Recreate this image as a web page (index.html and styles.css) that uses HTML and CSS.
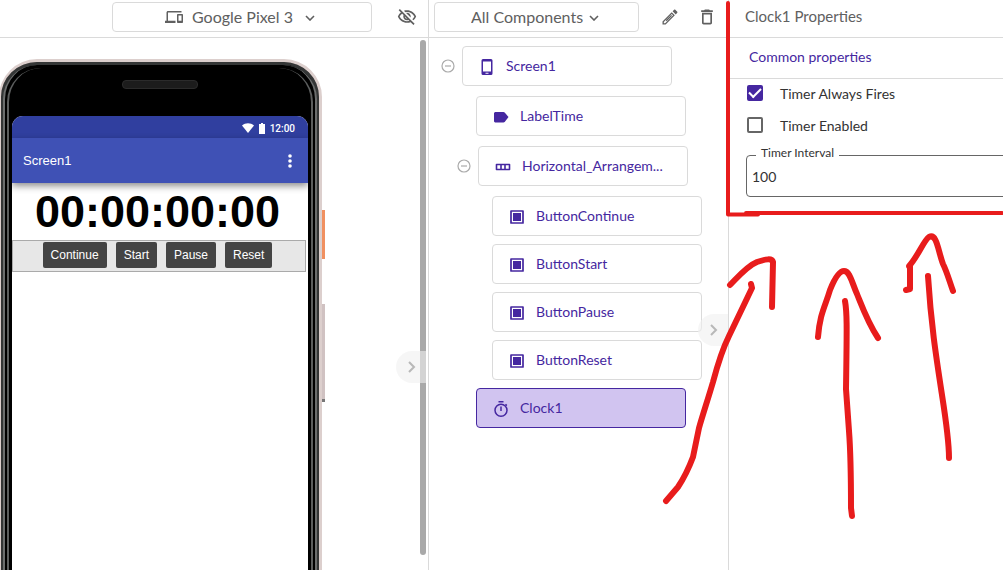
FILE: index.html
```
<!DOCTYPE html>
<html lang="en">
<head>
    <meta charset="utf-8">
    <title>Designer</title>
    <link rel="stylesheet" href="styles.css">
</head>
<body>
    <div class="designer">
        <section class="viewer">
            <header class="bar viewer-bar">
                <div class="select-box device-select">
                    <svg class="device-icon" width="18" height="18" viewBox="0 0 24 24"><path fill="currentColor" d="M4 6h18V4H4c-1.100 0-2 .9-2 2v11H0v3h14v-3H4V6zm19 2h-6c-.55 0-1 .45-1 1v10c0 .55.45 1 1 1h6c.55 0 1-.45 1-1V9c0-.55-.45-1-1-1zm-1 9h-4v-7h4v7z"/></svg>
                    <select aria-label="Device">
                        <option>Google Pixel 3</option>
                        <option>Tablet</option>
                    </select>
                    <svg class="chevron" width="10" height="6" viewBox="0 0 10 6"><path fill="none" stroke="currentColor" stroke-width="1.600" d="M1 1l4 4 4-4"/></svg>
                </div>
                <button type="button" class="icon-button" aria-label="Show hidden components">
                    <svg width="20" height="20" viewBox="0 0 24 24"><path fill="currentColor" d="M12 6c3.790 0 7.170 2.130 8.820 5.500-.59 1.220-1.420 2.270-2.410 3.120l1.410 1.410c1.390-1.230 2.490-2.770 3.180-4.530C21.270 7.110 17 4 12 4c-1.270 0-2.490.2-3.640.57l1.650 1.650C10.660 6.090 11.320 6 12 6zm-1.070 1.140L13 9.210c.57.25 1.030.71 1.280 1.280l2.070 2.070c.08-.34.14-.7.14-1.070C16.500 9.010 14.480 7 12 7c-.37 0-.72.05-1.070.14zM2.010 3.870l2.680 2.680C3.060 7.830 1.770 9.530 1 11.500 2.730 15.890 7 19 12 19c1.520 0 2.980-.29 4.320-.82l3.420 3.420 1.410-1.410L3.420 2.450 2.010 3.870zm7.500 7.500l2.610 2.610c-.04.01-.08.02-.12.02-1.380 0-2.500-1.120-2.500-2.500 0-.05.01-.08.01-.13zm-3.400-3.400l1.750 1.750c-.23.55-.36 1.150-.36 1.780 0 2.480 2.020 4.500 4.500 4.500.63 0 1.230-.13 1.770-.36l.98.98c-.88.24-1.800.38-2.750.38-3.790 0-7.170-2.130-8.820-5.500.7-1.430 1.720-2.610 2.930-3.530z"/></svg>
                </button>
            </header>
            <div class="stage">
                <div class="phone">
                    <div class="speaker"></div>
                    <div class="power-key"></div>
                    <div class="volume-key"></div>
                    <div class="screen">
                        <div class="status-bar">
                            <svg width="12" height="10" viewBox="0 0 12 10"><path fill="#fff" d="M0 2.500C3.500-.6 8.500-.6 12 2.500L6 10z"/></svg>
                            <svg width="6" height="11" viewBox="0 0 6 11"><path fill="#fff" d="M2 0h2v1h2v10H0V1h2z"/></svg>
                            <span>12:00</span>
                        </div>
                        <div class="title-bar">
                            <span>Screen1</span>
                            <svg width="4" height="16" viewBox="0 0 4 16"><g fill="#fff"><circle cx="2" cy="3" r="1.800"/><circle cx="2" cy="8" r="1.800"/><circle cx="2" cy="13" r="1.800"/></g></svg>
                        </div>
                        <div class="time">00:00:00:00</div>
                        <div class="arrangement">
                            <button type="button">Continue</button>
                            <button type="button">Start</button>
                            <button type="button">Pause</button>
                            <button type="button">Reset</button>
                        </div>
                    </div>
                </div>
                <div class="scroll-thumb"></div>
            </div>
            <button type="button" class="collapse collapse-viewer" aria-label="Collapse viewer">
                <svg width="8" height="12" viewBox="0 0 8 12"><path fill="none" stroke="currentColor" stroke-width="2" d="M1 1l5 5-5 5"/></svg>
            </button>
        </section>

        <section class="components">
            <header class="bar components-bar">
                <div class="select-box components-select">
                    <select aria-label="Components">
                        <option>All Components</option>
                    </select>
                    <svg class="chevron" width="10" height="6" viewBox="0 0 10 6"><path fill="none" stroke="currentColor" stroke-width="1.600" d="M1 1l4 4 4-4"/></svg>
                </div>
                <button type="button" class="icon-button" aria-label="Rename">
                    <svg width="20" height="20" viewBox="0 0 24 24"><path fill="currentColor" fill-rule="evenodd" d="M3 17.250V21h3.750L17.810 9.940l-3.750-3.750L3 17.250zM6.200 19.500H4.600v-1.600l9.460-9.500 1.600 1.600L6.200 19.500zM7 16l6.500-6.500.9.9L7.900 17zM20.710 5.630l-2.340-2.340c-.39-.39-1.020-.39-1.410 0l-1.830 1.830 3.750 3.750 1.830-1.830c.39-.39.39-1.020 0-1.410z"/></svg>
                </button>
                <button type="button" class="icon-button" aria-label="Delete">
                    <svg width="20" height="20" viewBox="0 0 24 24"><path fill="currentColor" d="M6 19c0 1.100.9 2 2 2h8c1.100 0 2-.9 2-2V7H6v12zM8 9h8v10H8V9zm7.500-5l-1-1h-5l-1 1H5v2h14V4z"/></svg>
                </button>
            </header>

            <ul class="tree">
                <li>
                    <div class="row">
                        <button type="button" class="toggle" aria-label="Collapse"><svg width="14" height="14" viewBox="0 0 14 14"><circle cx="7" cy="7" r="6" fill="none" stroke="currentColor" stroke-width="1.200"/><path stroke="currentColor" stroke-width="1.200" d="M4 7h6"/></svg></button>
                        <a href="#" class="node"><svg width="18" height="18" viewBox="0 0 18 18"><path fill="currentColor" fill-rule="evenodd" d="M5 1h8a1.500 1.500 0 0 1 1.500 1.500v13A1.500 1.500 0 0 1 13 17H5a1.500 1.500 0 0 1-1.500-1.500v-13A1.500 1.500 0 0 1 5 1zm0 2.500v10h8v-10zm2.500 11.300v.9h3v-.9z"/></svg><span>Screen1</span></a>
                    </div>
                    <ul>
                        <li>
                            <a href="#" class="node leaf"><svg width="18" height="18" viewBox="0 0 18 18"><path fill="currentColor" d="M3 4h8.500l1.200.6L16.500 9l-3.800 5-1.200.5H3L2 13.500V5z"/></svg><span>LabelTime</span></a>
                        </li>
                        <li>
                            <div class="row">
                                <button type="button" class="toggle" aria-label="Collapse"><svg width="14" height="14" viewBox="0 0 14 14"><circle cx="7" cy="7" r="6" fill="none" stroke="currentColor" stroke-width="1.200"/><path stroke="currentColor" stroke-width="1.200" d="M4 7h6"/></svg></button>
                                <a href="#" class="node"><svg width="18" height="18" viewBox="0 0 18 18"><path fill="none" stroke="currentColor" stroke-width="1.600" stroke-linejoin="round" d="M2.500 6.500h13v5h-13zM7 6.500v5M11 6.500v5"/></svg><span>Horizontal_Arrangem...</span></a>
                            </div>
                            <ul class="tight">
                                <li><a href="#" class="node leaf"><svg width="18" height="18" viewBox="0 0 18 18"><rect x="3" y="3" width="12" height="12" fill="none" stroke="currentColor" stroke-width="1.700" stroke-linejoin="round"/><path fill="currentColor" d="M5 5h8v8H5z"/></svg><span>ButtonContinue</span></a></li>
                                <li><a href="#" class="node leaf"><svg width="18" height="18" viewBox="0 0 18 18"><rect x="3" y="3" width="12" height="12" fill="none" stroke="currentColor" stroke-width="1.700" stroke-linejoin="round"/><path fill="currentColor" d="M5 5h8v8H5z"/></svg><span>ButtonStart</span></a></li>
                                <li><a href="#" class="node leaf"><svg width="18" height="18" viewBox="0 0 18 18"><rect x="3" y="3" width="12" height="12" fill="none" stroke="currentColor" stroke-width="1.700" stroke-linejoin="round"/><path fill="currentColor" d="M5 5h8v8H5z"/></svg><span>ButtonPause</span></a></li>
                                <li><a href="#" class="node leaf"><svg width="18" height="18" viewBox="0 0 18 18"><rect x="3" y="3" width="12" height="12" fill="none" stroke="currentColor" stroke-width="1.700" stroke-linejoin="round"/><path fill="currentColor" d="M5 5h8v8H5z"/></svg><span>ButtonReset</span></a></li>
                            </ul>
                        </li>
                        <li class="last">
                            <a href="#" class="node leaf selected"><svg width="18" height="18" viewBox="0 0 18 18"><g fill="none" stroke="currentColor" stroke-width="1.500"><circle cx="9" cy="10.300" r="6"/><path d="M6.500 1.700h5M9 6.500v4.500M13.500 4.300l1.300 1.300"/></g></svg><span>Clock1</span></a>
                        </li>
                    </ul>
                </li>
            </ul>
            <button type="button" class="collapse collapse-components" aria-label="Collapse components">
                <svg width="8" height="12" viewBox="0 0 8 12"><path fill="none" stroke="currentColor" stroke-width="2" d="M1 1l5 5-5 5"/></svg>
            </button>
        </section>

        <section class="properties">
            <header class="bar properties-bar">Clock1 Properties</header>
            <h2>Common properties</h2>
            <label class="check"><input type="checkbox" checked> Timer Always Fires</label>
            <label class="check"><input type="checkbox"> Timer Enabled</label>
            <div class="field">
                <label for="interval">Timer Interval</label>
                <input type="text" id="interval" value="100">
            </div>
        </section>
    </div>

    <!-- hand-drawn marks over the properties panel -->
    <svg class="marks" width="1003" height="570" viewBox="0 0 1003 570">
        <g fill="none" stroke="#e81c1c" stroke-linecap="round" stroke-linejoin="round">
            <path stroke-width="4" d="M728 3v211.500h30M746 213h256"/>
            <g stroke-width="6">
                <path d="M666 501l12-14c8-12 12-22 15-30l6-29c4-14 9-29 14-46 4-15 9-32 16-46l23-48-1-4M730 285c8-8 17-19 27-23 9-3 15-4 16 0l-1 45"/>
                <path d="M818 337c2-24 7-30 12-47 4-10 9-19 14-19 6 0 8 12 13 23 6 15 11 29 21 44M845 301c2 11 2 22 1 88l3 42c2 26 2 60 2 77l1 8"/>
                <path d="M906 290l4-1v-23l-1 0c8-8 15-26 20-29 8-4 9 14 14 27 4 8 6 16 10 27M928 276c3 48 8 80 14 119 5 32 7 47 7 63"/>
            </g>
        </g>
    </svg>
</body>
</html>
```
FILE: styles.css
```
* {
    box-sizing: border-box;
}
body {
    margin: 0;
    font-family: Lato, "Liberation Sans", sans-serif;
    font-size: 14px;
    color: #333;
    background: #fff;
    overflow: hidden;
}
button {
    font: inherit;
    border: 0;
    padding: 0;
    background: none;
    cursor: pointer;
}
svg {
    display: block;
    flex: none;
}
.designer {
    display: grid;
    grid-template-columns: minmax(0, 1fr) 300px 275px;
    height: 100vh;
}
.viewer, .components {
    position: relative;
    overflow: hidden;
}
.components, .properties {
    border-left: 1px solid #dadada;
}

/* top bars */
.bar {
    display: flex;
    align-items: center;
    height: 38px;
    padding-bottom: 3px;
    border-bottom: 1px solid #dadada;
    color: #606060;
    font-size: 16px;
}
.viewer-bar {
    justify-content: flex-end;
    gap: 25px;
    padding-right: 11px;
}
.components-bar {
    gap: 17px;
    padding-left: 5px;
}
.components-bar .components-select {
    margin-right: 4px;
}
.properties-bar {
    padding: 0 0 5px 16px;
    font-size: 15px;
}
.select-box {
    position: relative;
    height: 30px;
}
.select-box select {
    appearance: none;
    width: 100%;
    height: 100%;
    border: 1px solid #dadada;
    border-radius: 4px;
    background: #fff;
    color: #606060;
    font: inherit;
}
.device-select {
    width: 260px;
}
.device-select select {
    padding: 0 0 2px 79px;
}
.components-select {
    width: 205px;
}
.components-select select {
    padding: 0 0 1px 36px;
}
.device-icon {
    position: absolute;
    left: 53px;
    top: 6px;
}
.chevron {
    position: absolute;
    top: 13px;
    right: 57px;
}
.components-select .chevron {
    right: 40px;
}
.icon-button {
    color: #606060;
}

/* phone */
.stage {
    position: relative;
    height: calc(100vh - 38px);
    padding-top: 21px;
    overflow: hidden;
}
.phone {
    position: relative;
    width: 323px;
    height: 640px;
    margin-left: -1px;
    padding: 54px 11px 0;
    border: 3px solid #dccfcd;
    border-width: 3px 3px 3px 2px;
    border-radius: 38px;
    background: #000;
    box-shadow: inset 0 0 0 3px #343636;
}
.phone::before, .phone::after {
    content: "";
    position: absolute;
    border: solid #6c6e6e;
    border-width: 0 2px;
    border-radius: 34px;
    inset: 3px 2px;
}
.phone::after {
    border-color: #5c5e5e;
    inset: 6px;
}
.speaker {
    position: absolute;
    left: 121px;
    top: 18px;
    width: 76px;
    height: 9px;
    border: 1px solid #2b2b2b;
    border-radius: 4px;
    background: #1c1c1c;
}
.power-key, .volume-key {
    position: absolute;
    right: -6px;
    top: 148px;
    width: 3px;
    height: 49px;
    background: #f09060;
}
.volume-key {
    top: 242px;
    height: 98px;
    background: #d0c2c2;
    border-bottom: 3px solid #777;
}
.screen {
    position: relative;
    z-index: 1;
    height: 560px;
    border-radius: 11px 11px 0 0;
    background: #fff;
    overflow: hidden;
    font-family: "Liberation Sans", Arial, sans-serif;
}
.status-bar {
    display: flex;
    align-items: center;
    justify-content: flex-end;
    gap: 5px;
    height: 22px;
    padding: 2px 13px 0 0;
    background: #303f9f;
    color: #fff;
    font: 500 10px Roboto, sans-serif;
}
.title-bar {
    display: flex;
    align-items: center;
    justify-content: space-between;
    height: 45px;
    padding: 0 16px 0 11px;
    background: #3f51b5;
    box-shadow: 0 3px 7px rgba(0, 0, 0, .45);
    color: #fff;
    font-size: 13px;
}
.time {
    margin: 4px 5px 0 0;
    height: 53px;
    line-height: 50px;
    text-align: center;
    color: #000;
    font-size: 45px;
    font-weight: bold;
}
.arrangement {
    display: flex;
    justify-content: center;
    gap: 9px;
    height: 32px;
    margin-right: 2px;
    padding: 1px 3px 0 0;
    border: 1px solid #aaa;
    background: #e7e7e7;
}
.arrangement button {
    height: 26px;
    padding: 0 8px;
    border-radius: 2px;
    background: #444;
    color: #fff;
    font-size: 12px;
}
.scroll-thumb {
    position: absolute;
    top: 2px;
    right: 2px;
    width: 6px;
    height: calc(100% - 17px);
    border-radius: 3px;
    background: #a9a9a9;
}
.collapse {
    position: absolute;
    display: flex;
    align-items: center;
    width: 30px;
    height: 32px;
    padding-left: 12px;
    border-radius: 16px 0 0 16px;
    background: rgba(240, 240, 240, .6);
    color: #b8b8b8;
}
.collapse-viewer {
    top: 351px;
    right: 2px;
}
.collapse-components {
    top: 314px;
    right: 0;
}

/* component tree */
.tree, .tree ul {
    list-style: none;
    margin: 0;
    padding: 0;
}
.tree {
    padding: 8px 0 0 12px;
}
.tree ul {
    display: grid;
    gap: 10px;
    margin-top: 10px;
    padding-left: 16px;
}
.tree .tight {
    gap: 8px;
}
.tree .last {
    margin-top: -2px;
}
.row {
    display: flex;
    align-items: center;
    gap: 7px;
}
.toggle {
    color: #aaa;
}
.node {
    display: flex;
    align-items: center;
    gap: 10px;
    width: 210px;
    height: 40px;
    padding: 2px 15px 0;
    border: 1px solid #dadada;
    border-radius: 4px;
    background: #fff;
    color: #4527a0;
    text-decoration: none;
}
.node span {
    padding-bottom: 4px;
    white-space: nowrap;
}
.leaf {
    margin-left: 19px;
}
.selected {
    border-color: #4527a0;
    background: #d1c4f0;
}

/* properties */
.properties {
    overflow: hidden;
}
.properties h2 {
    margin: 0;
    padding-left: 20px;
    height: 41px;
    line-height: 38px;
    border-bottom: 1px solid #dadada;
    color: #4527a0;
    font-size: 14px;
    font-weight: normal;
}
.check {
    display: flex;
    align-items: center;
    gap: 17px;
    height: 32px;
    padding: 0 0 4px 18px;
}
.check input {
    appearance: none;
    display: grid;
    place-items: center;
    width: 16px;
    height: 16px;
    margin: 0;
    border: 2px solid #666;
    border-radius: 2px;
}
.check input:checked {
    border-color: #4527a0;
    background: #4527a0;
}
.check input:checked::before {
    content: "";
    width: 10px;
    height: 5px;
    margin-top: -3px;
    border: solid #fff;
    border-width: 0 0 2px 2px;
    transform: rotate(-45deg);
}
.field {
    position: relative;
    margin: 12px -8px 0 17px;
}
.field label {
    position: absolute;
    left: 10px;
    top: -10px;
    padding: 0 5px;
    background: #fff;
    font-size: 12px;
    line-height: 16px;
}
.field input {
    width: 100%;
    height: 42px;
    padding: 0 5px;
    border: 1px solid #666;
    border-radius: 4px;
    color: #333;
    font: inherit;
}

.marks {
    position: absolute;
    top: 0;
    left: 0;
    pointer-events: none;
}
```
